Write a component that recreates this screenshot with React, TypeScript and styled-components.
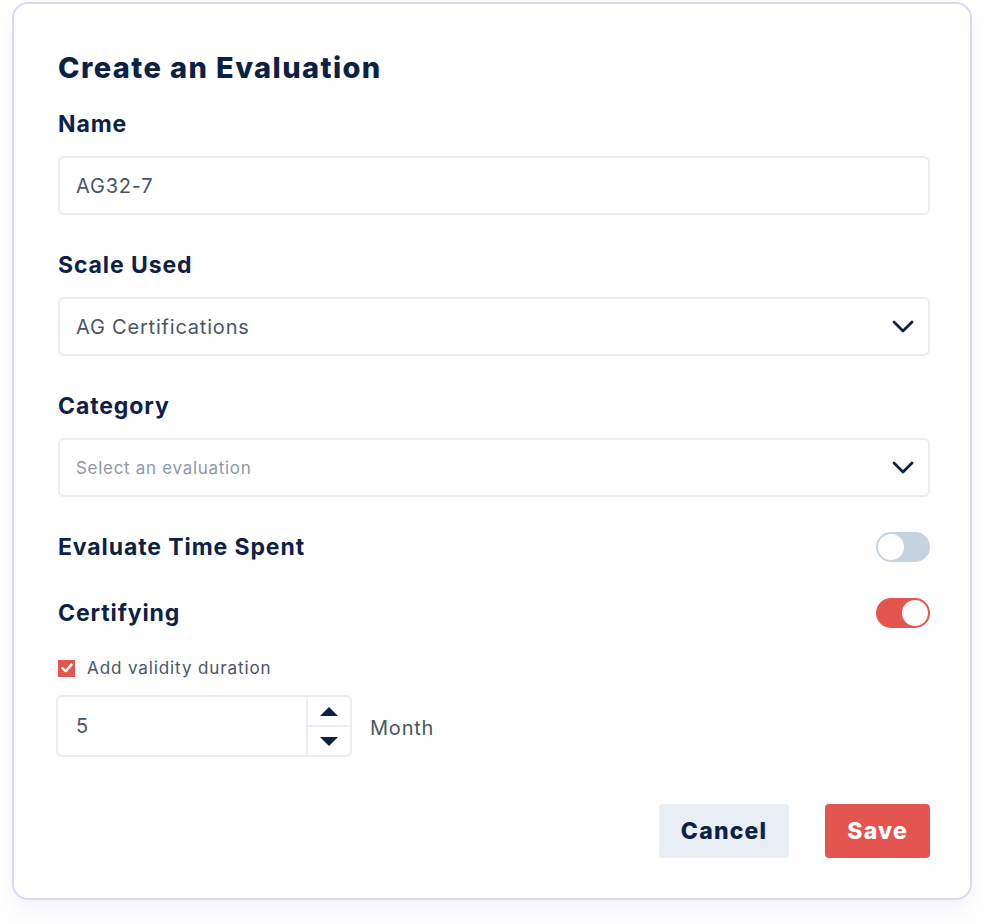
import styled, { createGlobalStyle } from "styled-components";

const GlobalStyle = createGlobalStyle`
  body {
    margin: 0;
    background: #ffffff;
    font-family: Inter, "Noto Sans", sans-serif;
    color: #0c2145;
  }
`;

export default function App() {
  return (
    <Page>
      <GlobalStyle />
      <Card>
        <Title>Create an Evaluation</Title>

        <Label>Name</Label>
        <Field>
          <FieldText>AG32-7</FieldText>
        </Field>

        <Label>Scale Used</Label>
        <Field>
          <FieldText>AG Certifications</FieldText>
          <Chevron />
        </Field>

        <Label>Category</Label>
        <Field>
          <FieldText $placeholder>Select an evaluation</FieldText>
          <Chevron />
        </Field>

        <ToggleRow>
          <RowLabel>Evaluate Time Spent</RowLabel>
          <Toggle $on={false}><Knob /></Toggle>
        </ToggleRow>

        <ToggleRow $tight>
          <RowLabel>Certifying</RowLabel>
          <Toggle $on><Knob /></Toggle>
        </ToggleRow>

        <CheckRow>
          <CheckBox>
            <svg width="12" height="10" viewBox="0 0 12 10">
              <path d="M1.5 5.2 L4.6 8.2 L10.5 1.6" fill="none" stroke="#fff" strokeWidth="2.4" strokeLinecap="round" strokeLinejoin="round" />
            </svg>
          </CheckBox>
          <CheckText>Add validity duration</CheckText>
        </CheckRow>

        <DurationRow>
          <NumberBox>
            <NumberValue>5</NumberValue>
            <Spinner>
              <SpinButton>
                <svg width="18" height="9" viewBox="0 0 18 9"><path d="M9 0 L18 9 L0 9 Z" fill="#0c2145" /></svg>
              </SpinButton>
              <SpinButton>
                <svg width="18" height="9" viewBox="0 0 18 9"><path d="M0 0 L18 0 L9 9 Z" fill="#0c2145" /></svg>
              </SpinButton>
            </Spinner>
          </NumberBox>
          <Unit>Month</Unit>
        </DurationRow>

        <Actions>
          <Button>Cancel</Button>
          <Button $primary>Save</Button>
        </Actions>
      </Card>
    </Page>
  );
}

function Chevron() {
  return (
    <ChevronIcon width="22" height="13" viewBox="0 0 22 13">
      <path d="M2 2 L11 11 L20 2" fill="none" stroke="#0c2145" strokeWidth="2.8" strokeLinecap="round" strokeLinejoin="round" />
    </ChevronIcon>
  );
}

const Page = styled.div`
  padding: 2px 12px 24px 12px;
`;

const Card = styled.section`
  width: 960px;
  box-sizing: border-box;
  border: 2px solid #ddd6fb;
  border-radius: 16px;
  padding: 44px 40px 40px 44px;
  display: flex;
  flex-direction: column;
  box-shadow: 0 14px 24px rgba(120, 110, 180, 0.08);
`;

const Title = styled.h1`
  margin: 0;
  font-size: 29px;
  line-height: 40px;
  font-weight: 800;
  letter-spacing: 1.4px;
`;

const Label = styled.label`
  display: block;
  margin-top: 35px;
  font-size: 23px;
  line-height: 30px;
  font-weight: 700;
  letter-spacing: 0.9px;

  ${Title} + & {
    margin-top: 21px;
  }
`;

const Field = styled.div`
  margin-top: 17px;
  height: 59px;
  box-sizing: border-box;
  border: 2px solid #e9eef5;
  border-radius: 6px;
  padding: 0 14px 0 16px;
  display: flex;
  align-items: center;
  justify-content: space-between;
`;

const FieldText = styled.span<{ $placeholder?: boolean }>`
  font-size: ${(p) => (p.$placeholder ? "17px" : "20px")};
  letter-spacing: ${(p) => (p.$placeholder ? "0.7px" : "0.8px")};
  color: ${(p) => (p.$placeholder ? "#8f97a6" : "#4a5568")};
`;

const ChevronIcon = styled.svg`
  display: block;
`;

const ToggleRow = styled.div<{ $tight?: boolean }>`
  margin-top: ${(p) => (p.$tight ? "36px" : "35px")};
  height: 30px;
  display: flex;
  align-items: center;
  justify-content: space-between;
`;

const RowLabel = styled.span`
  font-size: 23px;
  font-weight: 700;
  letter-spacing: 0.9px;
`;

const Toggle = styled.div<{ $on: boolean }>`
  width: 54px;
  height: 30px;
  box-sizing: border-box;
  border-radius: 15px;
  padding: 2px;
  background: ${(p) => (p.$on ? "#e55550" : "#c6d2df")};
  display: flex;
  justify-content: ${(p) => (p.$on ? "flex-end" : "flex-start")};
`;

const Knob = styled.div`
  width: 26px;
  height: 26px;
  border-radius: 50%;
  background: #ffffff;
`;

const CheckRow = styled.div`
  margin-top: 28px;
  display: flex;
  align-items: center;
  gap: 12px;
`;

const CheckBox = styled.span`
  width: 17px;
  height: 17px;
  background: #e55550;
  display: flex;
  align-items: center;
  justify-content: center;
`;

const CheckText = styled.span`
  font-size: 17px;
  line-height: 24px;
  letter-spacing: 0.9px;
  color: #4a5568;
`;

const DurationRow = styled.div`
  margin-top: 15px;
  margin-left: -2px;
  display: flex;
  align-items: center;
  gap: 18px;
`;

const NumberBox = styled.div`
  width: 296px;
  height: 62px;
  box-sizing: border-box;
  border: 2px solid #e9eef5;
  border-radius: 6px;
  display: flex;
`;

const NumberValue = styled.span`
  flex: 1;
  display: flex;
  align-items: center;
  padding-left: 18px;
  font-size: 20px;
  color: #4a5568;
`;

const Spinner = styled.div`
  width: 42px;
  border-left: 2px solid #e9eef5;
  display: flex;
  flex-direction: column;
`;

const SpinButton = styled.div`
  flex: 1;
  display: flex;
  align-items: center;
  justify-content: center;

  & + & {
    border-top: 2px solid #e9eef5;
  }
`;

const Unit = styled.span`
  padding-top: 3px;
  font-size: 20px;
  letter-spacing: 0.8px;
  color: #4a5568;
`;

const Actions = styled.div`
  margin-top: 47px;
  display: flex;
  justify-content: flex-end;
  gap: 36px;
`;

const Button = styled.button<{ $primary?: boolean }>`
  height: 54px;
  padding: 0 22px;
  border: none;
  border-radius: 4px;
  font-family: Inter, "Noto Sans", sans-serif;
  font-size: 23px;
  font-weight: 800;
  letter-spacing: 1.2px;
  background: ${(p) => (p.$primary ? "#e55550" : "#e9eef5")};
  color: ${(p) => (p.$primary ? "#ffffff" : "#0c2145")};
  cursor: pointer;
`;
